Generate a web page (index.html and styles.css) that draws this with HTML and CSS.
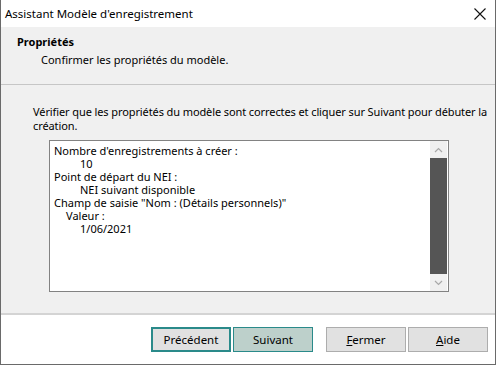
FILE: index.html
```html
<!DOCTYPE html>
<html lang="fr">
<head>
    <meta charset="UTF-8">
    <title>Assistant Modèle d'enregistrement</title>
    <link rel="stylesheet" href="styles.css">
</head>
<body>
    <div class="window">
        <!-- Barre de titre -->
        <div class="titlebar">
            <span class="title">Assistant Modèle d'enregistrement</span>
            <svg class="close" width="12" height="12" viewBox="0 0 12 12">
                <path d="M0.5 0.5 L11.5 11.5 M11.5 0.5 L0.5 11.5" stroke="#111" stroke-width="1.1" fill="none"/>
            </svg>
        </div>

        <!-- En-tête -->
        <div class="header">
            <div class="header-title">Propriétés</div>
            <div class="header-sub">Confirmer les propriétés du modèle.</div>
        </div>

        <!-- Contenu -->
        <div class="content">
            <p class="intro">Vérifier que les propriétés du modèle sont correctes et cliquer sur Suivant pour débuter la<br>création.</p>
            <div class="listbox">
                <div class="list-text">
                    <div>Nombre d'enregistrements à créer :</div>
                    <div class="ind2">10</div>
                    <div>Point de départ du NEI :</div>
                    <div class="ind2">NEI suivant disponible</div>
                    <div>Champ de saisie "Nom : (Détails personnels)"</div>
                    <div class="ind1">Valeur :</div>
                    <div class="ind2">1/06/2021</div>
                </div>
                <div class="scrollbar">
                    <div class="arrow">
                        <svg width="9" height="6" viewBox="0 0 9 6"><path d="M1 5 L4.5 1.5 L8 5" stroke="#a8a8a8" stroke-width="1.2" fill="none"/></svg>
                    </div>
                    <div class="thumb"></div>
                    <div class="arrow">
                        <svg width="9" height="6" viewBox="0 0 9 6"><path d="M1 1 L4.5 4.5 L8 1" stroke="#a8a8a8" stroke-width="1.2" fill="none"/></svg>
                    </div>
                </div>
            </div>
        </div>

        <!-- Boutons -->
        <div class="footer">
            <button class="btn btn-focus">Précédent</button>
            <button class="btn btn-hover">Suivant</button>
            <button class="btn btn-gap"><u>F</u>ermer</button>
            <button class="btn"><u>A</u>ide</button>
        </div>
    </div>
</body>
</html>
```

FILE: styles.css
```css
/* Fenêtre */
body {
    margin: 0;
    padding: 0;
    background-color: #5c5c5c;
    font-family: "Noto Sans", "Open Sans", sans-serif;
    font-size: 11px;
    color: #000;
}
.window {
    width: 494px;
    height: 364px;
    border: 1px solid #6a6a6a;
    border-top: none;
    background: #f0f0f0;
    display: flex;
    flex-direction: column;
}

/* Barre de titre */
.titlebar {
    height: 27px;
    background: #fff;
    display: flex;
    align-items: center;
    justify-content: space-between;
    padding: 0 9px 0 4px;
}
.title {
    font-size: 11.5px;
}

/* En-tête */
.header {
    height: 58px;
    padding: 7px 0 0 16px;
    box-sizing: border-box;
    border-bottom: 1px solid #c6c6c6;
}
.header-title {
    font-weight: bold;
    line-height: 15px;
}
.header-sub {
    padding-left: 24px;
    margin-top: 3px;
    line-height: 15px;
}

/* Contenu */
.content {
    height: 228px;
    padding: 20px 0 0 32px;
    box-sizing: border-box;
}
.intro {
    margin: 0;
    white-space: nowrap;
    letter-spacing: -0.1px;
    line-height: 14px;
}
.listbox {
    margin: 7px 0 0 16px;
    width: 400px;
    height: 152px;
    box-sizing: border-box;
    border: 1px solid #828282;
    background: #fff;
    display: flex;
}
.list-text {
    flex: 1;
    padding: 3px 0 0 4px;
    line-height: 13px;
}
.ind1 { padding-left: 12px; }
.ind2 { padding-left: 26px; }

.scrollbar {
    width: 17px;
    margin: 0 1px 0 0;
    display: flex;
    flex-direction: column;
    background: #f0f0f0;
}
.arrow {
    height: 17px;
    display: flex;
    align-items: center;
    justify-content: center;
}
.thumb {
    flex: 1;
    background: #555;
}

/* Boutons */
.footer {
    flex: 1;
    background: #fff;
    border-top: 2px solid #d4d4d4;
    display: flex;
    justify-content: flex-end;
    align-items: flex-start;
    padding: 12px 7px 0 0;
    gap: 2px;
}
.btn {
    width: 80px;
    height: 25px;
    font-family: inherit;
    font-size: 11.5px;
    color: #000;
    background: #e1e1e1;
    border: 1px solid #adadad;
    padding: 0;
}
.btn-focus {
    border: 2px solid #2a8a8a;
}
.btn-hover {
    background: #bdd0cb;
    border-color: #2a8a8a;
}
.btn-gap {
    margin-left: 11px;
}
```
